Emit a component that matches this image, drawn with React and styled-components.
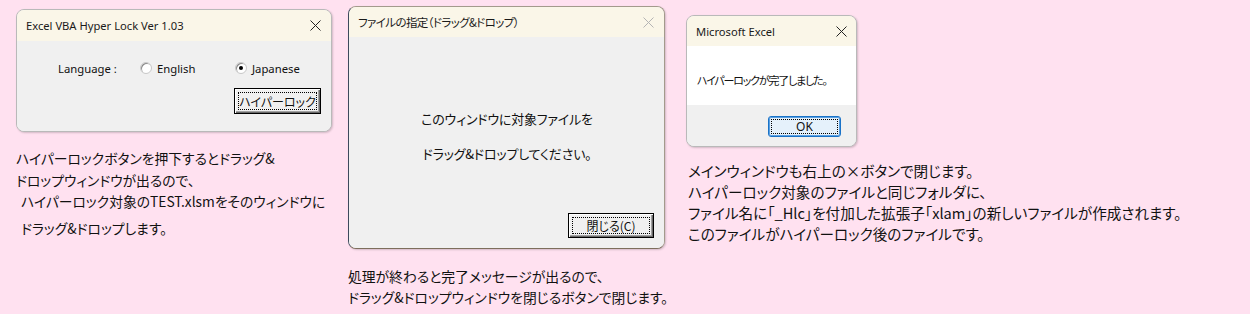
import React from "react";
import styled, { createGlobalStyle } from "styled-components";

const GlobalStyle = createGlobalStyle`
  html, body { margin: 0; padding: 0; background: #ffe1f0; }
  body { font-family: "Noto Sans CJK JP", "Noto Sans", sans-serif; color: #000; }
`;

const UI = `"Noto Sans", "Noto Sans CJK JP", sans-serif`;
const JP = `"Noto Sans CJK JP", sans-serif`;

const Page = styled.div`
  display: flex;
  align-items: flex-start;
  width: 1250px;
  height: 314px;
  overflow: hidden;
  background: #ffe1f0;
`;

const Column = styled.div`
  display: flex;
  flex-direction: column;
  flex: none;
  width: ${(p) => p.$width}px;
  margin-left: ${(p) => p.$left}px;
  padding-top: ${(p) => p.$top}px;
`;

const Window = styled.div`
  box-sizing: border-box;
  width: ${(p) => p.$w}px;
  height: ${(p) => p.$h}px;
  display: flex;
  flex-direction: column;
  border: 1px solid ${(p) => p.$border || "#b9b9b9"};
  border-left-color: ${(p) => p.$leftBorder || p.$border || "#b9b9b9"};
  border-bottom-color: ${(p) => p.$bottomBorder || p.$border || "#b9b9b9"};
  border-radius: 8px;
  overflow: hidden;
  background: #f0f0f0;
  box-shadow: 1px 1px 2px rgba(0, 0, 0, 0.18);
`;

const TitleBar = styled.div`
  flex: none;
  height: ${(p) => p.$h || 30}px;
  display: flex;
  align-items: center;
  justify-content: space-between;
  padding: 0 ${(p) => p.$pr || 10}px 0 ${(p) => p.$pl || 9}px;
  background: #faf6e8;
`;

const TitleText = styled.span`
  font-family: ${(p) => (p.$jp ? JP : UI)};
  font-size: ${(p) => p.$size || 12}px;
  letter-spacing: ${(p) => p.$ls || 0}px;
  font-feature-settings: ${(p) => (p.$jp ? '"palt"' : "normal")};
  color: #1a1a1a;
  white-space: nowrap;
`;

const CloseBox = styled.svg`
  flex: none;
  width: 11px;
  height: 11px;
`;

const Close = ({ color = "#222" }) => (
  <CloseBox viewBox="0 0 11 11">
    <path d="M0.5 0.5 L10.5 10.5 M10.5 0.5 L0.5 10.5" stroke={color} strokeWidth="1" fill="none" />
  </CloseBox>
);

const Body = styled.div`
  flex: ${(p) => (p.$h ? "none" : 1)};
  height: ${(p) => (p.$h ? `${p.$h}px` : "auto")};
  box-sizing: border-box;
  display: flex;
  flex-direction: column;
  background: ${(p) => p.$bg || "#f0f0f0"};
  padding: ${(p) => p.$pad || "0"};
`;

const OptionRow = styled.div`
  display: flex;
  align-items: center;
  height: 20px;
  margin-top: ${(p) => p.$mt}px;
  padding-left: ${(p) => p.$pl}px;
`;

const OptionCell = styled.div`
  flex: none;
  width: ${(p) => p.$w}px;
  display: flex;
  align-items: center;
  gap: 5px;
  font-family: ${UI};
  font-size: 11.3px;
  color: #111;
  white-space: nowrap;
`;

const RadioCircle = styled.span`
  flex: none;
  box-sizing: border-box;
  width: 12px;
  height: 12px;
  border-radius: 50%;
  background: #fff;
  border: 1px solid #c8c8c8;
  box-shadow: inset 1px 1px 0 #8a8a8a;
  display: flex;
  align-items: center;
  justify-content: center;
  &::before {
    content: "";
    width: 4px;
    height: 4px;
    border-radius: 50%;
    background: ${(p) => (p.$on ? "#000" : "transparent")};
  }
`;

const ButtonRow = styled.div`
  display: flex;
  justify-content: ${(p) => p.$justify || "flex-end"};
  margin-top: ${(p) => p.$mt || 0}px;
  padding: 0 ${(p) => p.$pr || 0}px 0 ${(p) => p.$pl || 0}px;
`;

const ClassicButton = styled.div`
  box-sizing: border-box;
  flex: none;
  width: ${(p) => p.$w}px;
  height: ${(p) => p.$h}px;
  display: flex;
  padding: 3px;
  border: 1px solid #000;
  background: #f0f0f0;
  box-shadow: inset 1px 1px 0 #fff, inset -1px -1px 0 #696969, inset -2px -2px 0 #a0a0a0;
`;

const ModernButton = styled.div`
  box-sizing: border-box;
  flex: none;
  width: ${(p) => p.$w}px;
  height: ${(p) => p.$h}px;
  display: flex;
  padding: 2px;
  border: 1px solid #1a73c8;
  border-radius: 3px;
  background: #e5f1fb;
  box-shadow: inset 0 0 0 1px #5a9fe0;
`;

const FocusRect = styled.span`
  flex: 1;
  display: flex;
  align-items: center;
  justify-content: center;
  border: 1px dotted #000;
  font-family: ${(p) => (p.$ui ? UI : JP)};
  font-size: 12px;
  font-feature-settings: "palt";
  letter-spacing: ${(p) => p.$ls || 0}px;
  color: #111;
  white-space: nowrap;
`;

const CenterText = styled.div`
  text-align: center;
  font-family: ${JP};
  font-size: 13px;
  font-feature-settings: "palt";
  letter-spacing: -0.2px;
  line-height: 20px;
  margin-top: ${(p) => p.$mt}px;
  padding-left: ${(p) => p.$pl || 0}px;
  color: #111;
  white-space: nowrap;
`;

const MsgText = styled.div`
  font-family: ${JP};
  font-size: 11px;
  font-feature-settings: "palt";
  letter-spacing: -1.2px;
  line-height: 20px;
  color: #111;
  white-space: nowrap;
`;

const Footer = styled.div`
  flex: 1;
  display: flex;
  align-items: flex-start;
  justify-content: flex-end;
  padding: ${(p) => p.$pad};
  background: #f0f0f0;
`;

const Notes = styled.div`
  display: flex;
  flex-direction: column;
  margin-top: ${(p) => p.$mt}px;
`;

const NoteLine = styled.div`
  font-family: ${JP};
  font-size: ${(p) => p.$size || 13.8}px;
  font-feature-settings: "palt";
  letter-spacing: 0px;
  line-height: 21px;
  height: 21px;
  margin-top: ${(p) => p.$mt || 0}px;
  padding-left: ${(p) => p.$indent || 0}px;
  color: #111;
  white-space: nowrap;
`;

export default function App() {
  return (
    <>
      <GlobalStyle />
      <Page>
        <Column $left={16} $top={9} $width={332}>
          <Window $w={316} $h={123}>
            <TitleBar $h={31}>
              <TitleText $size={11.2}>Excel VBA Hyper Lock Ver 1.03</TitleText>
              <Close />
            </TitleBar>
            <Body>
              <OptionRow $mt={17} $pl={41}>
                <OptionCell $w={82}>Language :</OptionCell>
                <OptionCell $w={95}>
                  <RadioCircle />
                  English
                </OptionCell>
                <OptionCell $w={80}>
                  <RadioCircle $on />
                  Japanese
                </OptionCell>
              </OptionRow>
              <ButtonRow $mt={10} $pr={10}>
                <ClassicButton $w={87} $h={26}>
                  <FocusRect>ハイパーロック</FocusRect>
                </ClassicButton>
              </ButtonRow>
            </Body>
          </Window>
          <Notes $mt={16}>
            <NoteLine>ハイパーロックボタンを押下するとドラッグ&amp;</NoteLine>
            <NoteLine $mt={1}>ドロップウィンドウが出るので、</NoteLine>
            <NoteLine $indent={5}>ハイパーロック対象のTEST.xlsmをそのウィンドウに</NoteLine>
            <NoteLine $mt={6} $indent={5}>ドラッグ&amp;ドロップします。</NoteLine>
          </Notes>
        </Column>

        <Column $left={0} $top={6} $width={338}>
          <Window $w={317} $h={243} $border="#a39a8c" $leftBorder="#3d4a5c" $bottomBorder="#7d6e5c">
            <TitleBar $h={30}>
              <TitleText $jp $size={11.5} $ls={-0.6}>ファイルの指定（ドラッグ&amp;ドロップ）</TitleText>
              <Close color="#b4b4b4" />
            </TitleBar>
            <Body>
              <CenterText $mt={72} $pl={1}>このウィンドウに対象ファイルを</CenterText>
              <CenterText $mt={15} $pl={1}>ドラッグ&amp;ドロップしてください。</CenterText>
              <ButtonRow $mt={49} $pr={10}>
                <ClassicButton $w={86} $h={25}>
                  <FocusRect>閉じる(C)</FocusRect>
                </ClassicButton>
              </ButtonRow>
            </Body>
          </Window>
          <Notes $mt={17}>
            <NoteLine>処理が終わると完了メッセージが出るので、</NoteLine>
            <NoteLine>ドラッグ&amp;ドロップウィンドウを閉じるボタンで閉じます。</NoteLine>
          </Notes>
        </Column>

        <Column $left={0} $top={15} $width={560}>
          <Window $w={171} $h={132}>
            <TitleBar $h={30} $pr={9}>
              <TitleText $size={11.2}>Microsoft Excel</TitleText>
              <Close />
            </TitleBar>
            <Body $bg="#ffffff" $pad="24px 0 0 10px" $h={59}>
              <MsgText>ハイパーロックが完了しました。</MsgText>
            </Body>
            <Footer $pad="11px 15px 0 0">
              <ModernButton $w={73} $h={21}>
                <FocusRect $ui>OK</FocusRect>
              </ModernButton>
            </Footer>
          </Window>
          <Notes $mt={13}>
            <NoteLine $size={14.6} $indent={2}>メインウィンドウも右上の×ボタンで閉じます。</NoteLine>
            <NoteLine $size={14.6} $indent={2}>ハイパーロック対象のファイルと同じフォルダに、</NoteLine>
            <NoteLine $size={14.6} $indent={2}>ファイル名に「_Hlc」を付加した拡張子「xlam」の新しいファイルが作成されます。</NoteLine>
            <NoteLine $size={14.6} $indent={2}>このファイルがハイパーロック後のファイルです。</NoteLine>
          </Notes>
        </Column>
      </Page>
    </>
  );
}
